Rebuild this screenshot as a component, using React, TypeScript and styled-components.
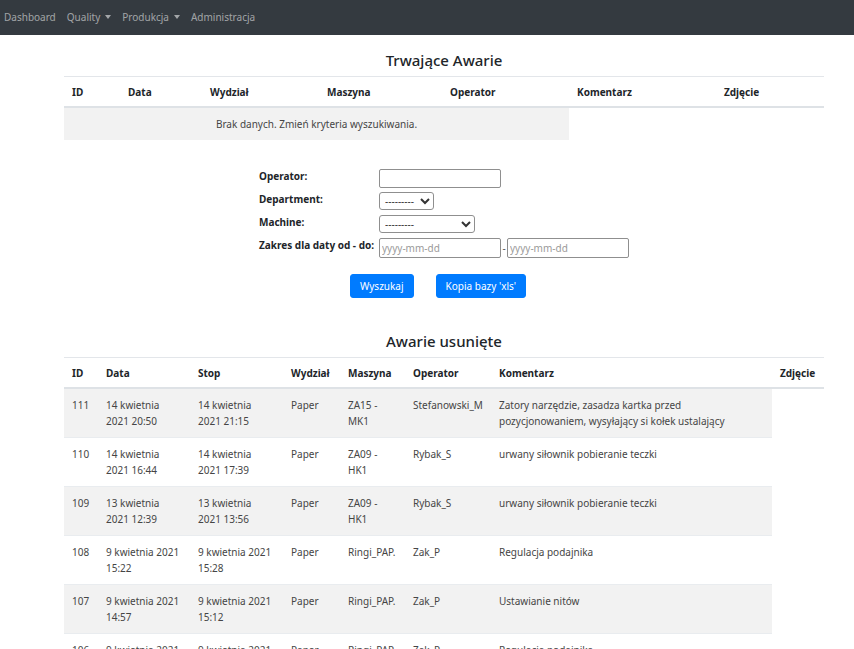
import React from "react";
import styled, { createGlobalStyle } from "styled-components";

const Global = createGlobalStyle`
  html, body { margin: 0; padding: 0; background: #fff; }
  body {
    font-family: "Noto Sans", "Open Sans", sans-serif;
    font-size: 10px;
    line-height: 16px;
    color: #333;
  }
  * { box-sizing: border-box; }
`;

const Navbar = styled.nav`
  height: 35px;
  background: #343a40;
  display: flex;
  align-items: center;
  padding: 0 4px 1px;
  gap: 11px;
`;

const NavLink = styled.a`
  color: rgba(255, 255, 255, 0.55);
  font-size: 10px;
  text-decoration: none;
  display: inline-flex;
  align-items: center;
  gap: 5px;
`;

const Caret = styled.span`
  display: inline-block;
  width: 0;
  height: 0;
  border-left: 3.5px solid transparent;
  border-right: 3.5px solid transparent;
  border-top: 4px solid rgba(255, 255, 255, 0.55);
`;

const Container = styled.main`
  width: 760px;
  margin-left: 64px;
`;

const Title = styled.h3<{ $top: number }>`
  margin: ${(p) => p.$top}px 0 0;
  height: 24px;
  text-align: center;
  font-size: 15px;
  font-weight: 500;
  line-height: 24px;
  color: #212529;
`;

const Table = styled.table`
  width: 760px;
  border-collapse: collapse;
  table-layout: fixed;
  margin-top: 4px;
`;

const Th = styled.th`
  text-align: left;
  font-weight: 700;
  color: #212529;
  padding: 7px 8px 6px;
  line-height: 16px;
  border-top: 1px solid #e3e6ea;
  border-bottom: 2px solid #dee2e6;
  vertical-align: bottom;
`;

const Tr = styled.tr<{ $striped?: boolean }>`
  & > td {
    background: ${(p) => (p.$striped ? "#f2f2f2" : "transparent")};
  }
`;

const Td = styled.td<{ $center?: boolean }>`
  padding: 8px;
  line-height: 16px;
  vertical-align: top;
  border-top: 1px solid #e9ecef;
  text-align: ${(p) => (p.$center ? "center" : "left")};
  color: #454545;
`;

const Form = styled.form`
  width: 370px;
  margin: 29px auto 0;
  display: grid;
  grid-template-columns: 120px auto;
  grid-auto-rows: 23px;
  align-items: start;
`;

const Label = styled.label`
  font-weight: 700;
  color: #212529;
  line-height: 14px;
  white-space: nowrap;
`;

const FieldRow = styled.div`
  display: flex;
  align-items: center;
  color: #555;
`;

const TextInput = styled.input<{ $h?: number }>`
  width: 122px;
  height: ${(p) => p.$h ?? 19}px;
  border: 1px solid #8f8f8f;
  border-radius: 2px;
  font-family: inherit;
  font-size: 10px;
  padding: 0 2px;
  color: #333;
  &::placeholder { color: #9a9a9a; }
`;

const Select = styled.select<{ $w: number }>`
  width: ${(p) => p.$w}px;
  height: 18px;
  border: 1px solid #8f8f8f;
  border-radius: 3px;
  font-family: inherit;
  font-size: 10px;
  padding: 0 1px;
  color: #333;
  background: #fff;
`;

const Dash = styled.span`
  width: 6px;
  text-align: center;
`;

const Buttons = styled.div`
  display: flex;
  justify-content: center;
  gap: 22px;
  margin-top: 13px;
  padding-right: 12px;
`;

const Button = styled.button`
  height: 24px;
  padding: 0 9px;
  background: #007bff;
  color: #fff;
  border: 1px solid #007bff;
  border-radius: 3px;
  font-family: inherit;
  font-size: 10px;
`;

const cols1 = [56, 82, 117, 123, 127, 147, 108];
const heads1 = ["ID", "Data", "Wydział", "Maszyna", "Operator", "Komentarz", "Zdjęcie"];

const cols2 = [34, 92, 93, 57, 65, 86, 281, 52];
const heads2 = ["ID", "Data", "Stop", "Wydział", "Maszyna", "Operator", "Komentarz", "Zdjęcie"];

const rows = [
  ["111", "14 kwietnia 2021 20:50", "14 kwietnia 2021 21:15", "Paper", "ZA15 - MK1", "Stefanowski_M", "Zatory narzędzie, zasadza kartka przed pozycjonowaniem, wysyłający si kołek ustalający"],
  ["110", "14 kwietnia 2021 16:44", "14 kwietnia 2021 17:39", "Paper", "ZA09 - HK1", "Rybak_S", "urwany siłownik pobieranie teczki"],
  ["109", "13 kwietnia 2021 12:39", "13 kwietnia 2021 13:56", "Paper", "ZA09 - HK1", "Rybak_S", "urwany siłownik pobieranie teczki"],
  ["108", "9 kwietnia 2021 15:22", "9 kwietnia 2021 15:28", "Paper", "Ringi_PAP.", "Zak_P", "Regulacja podajnika"],
  ["107", "9 kwietnia 2021 14:57", "9 kwietnia 2021 15:12", "Paper", "Ringi_PAP.", "Zak_P", "Ustawianie nitów"],
  ["106", "9 kwietnia 2021 13:40", "9 kwietnia 2021 13:52", "Paper", "Ringi_PAP.", "Zak_P", "Regulacja podajnika"],
];

export default function App() {
  return (
    <>
      <Global />
      <Navbar>
        <NavLink href="#">Dashboard</NavLink>
        <NavLink href="#">Quality <Caret /></NavLink>
        <NavLink href="#">Produkcja <Caret /></NavLink>
        <NavLink href="#">Administracja</NavLink>
      </Navbar>
      <Container>
        <Title $top={13}>Trwające Awarie</Title>
        <Table>
          <colgroup>
            {cols1.map((w, i) => <col key={i} style={{ width: w }} />)}
          </colgroup>
          <thead>
            <tr>{heads1.map((h) => <Th key={h}>{h}</Th>)}</tr>
          </thead>
          <tbody>
            <Tr $striped>
              <Td colSpan={5} $center>Brak danych. Zmień kryteria wyszukiwania.</Td>
            </Tr>
          </tbody>
        </Table>

        <Form onSubmit={(e) => e.preventDefault()}>
          <Label>Operator:</Label>
          <FieldRow><TextInput type="text" /></FieldRow>
          <Label>Department:</Label>
          <FieldRow>
            <Select $w={55}><option>---------</option></Select>
          </FieldRow>
          <Label>Machine:</Label>
          <FieldRow>
            <Select $w={96}><option>---------</option></Select>
          </FieldRow>
          <Label>Zakres dla daty od - do:</Label>
          <FieldRow>
            <TextInput type="text" placeholder="yyyy-mm-dd" $h={20} />
            <Dash>-</Dash>
            <TextInput type="text" placeholder="yyyy-mm-dd" $h={20} />
          </FieldRow>
        </Form>
        <Buttons>
          <Button type="button">Wyszukaj</Button>
          <Button type="button">Kopia bazy 'xls'</Button>
        </Buttons>

        <Title $top={31}>Awarie usunięte</Title>
        <Table>
          <colgroup>
            {cols2.map((w, i) => <col key={i} style={{ width: w }} />)}
          </colgroup>
          <thead>
            <tr>{heads2.map((h) => <Th key={h}>{h}</Th>)}</tr>
          </thead>
          <tbody>
            {rows.map((r, i) => (
              <Tr key={r[0]} $striped={i % 2 === 0}>
                {r.map((c, j) => <Td key={j}>{c}</Td>)}
              </Tr>
            ))}
          </tbody>
        </Table>
      </Container>
    </>
  );
}
